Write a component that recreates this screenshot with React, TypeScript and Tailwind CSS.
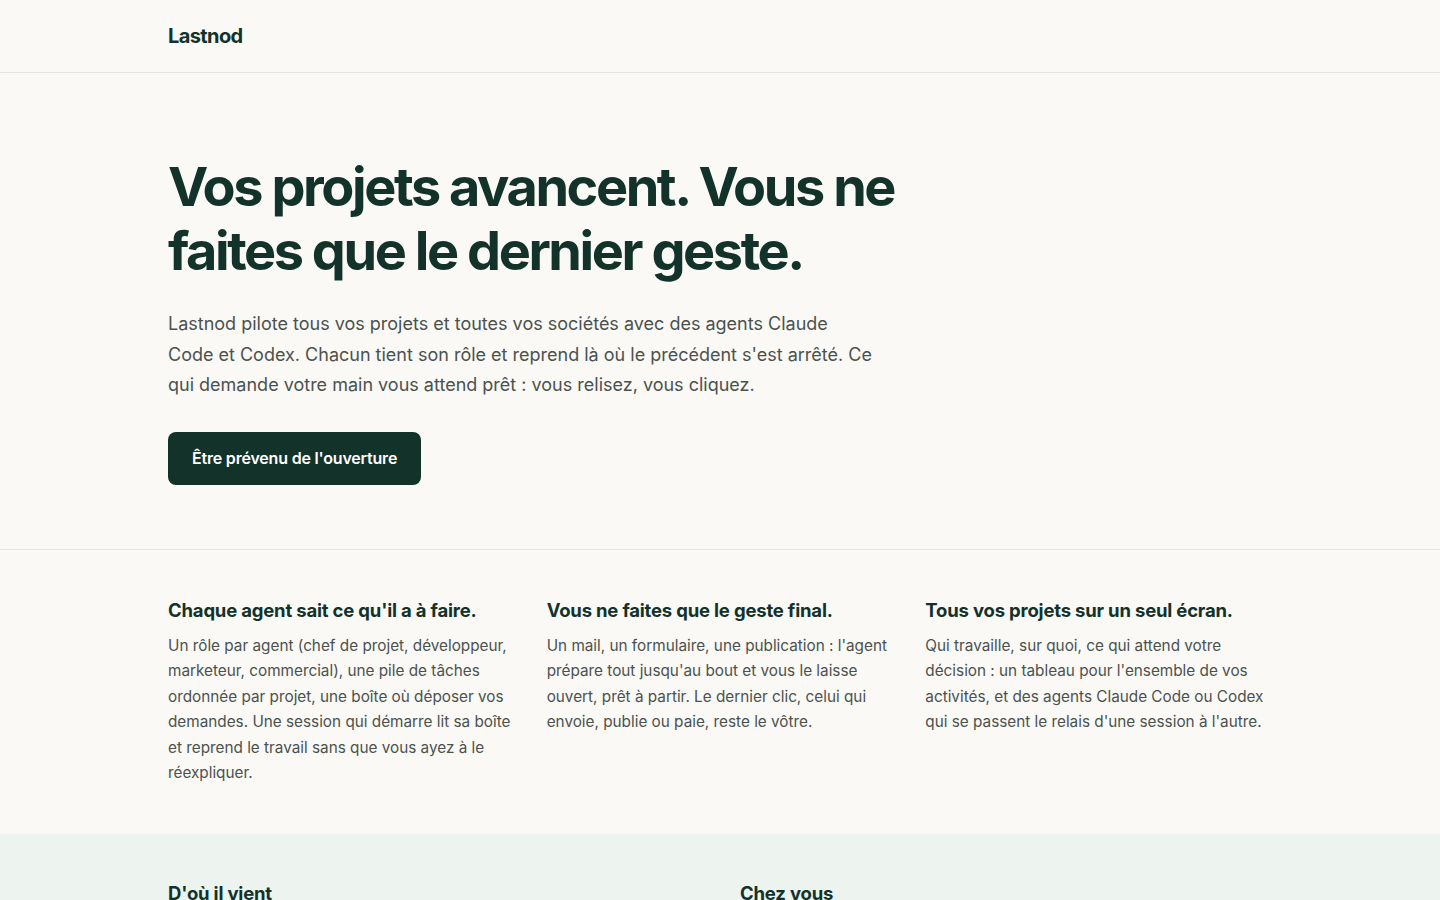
import React from "react";

const features = [
  {
    title: "Chaque agent sait ce qu'il a à faire.",
    body: "Un rôle par agent (chef de projet, développeur, marketeur, commercial), une pile de tâches ordonnée par projet, une boîte où déposer vos demandes. Une session qui démarre lit sa boîte et reprend le travail sans que vous ayez à le réexpliquer.",
  },
  {
    title: "Vous ne faites que le geste final.",
    body: "Un mail, un formulaire, une publication : l'agent prépare tout jusqu'au bout et vous le laisse ouvert, prêt à partir. Le dernier clic, celui qui envoie, publie ou paie, reste le vôtre.",
  },
  {
    title: "Tous vos projets sur un seul écran.",
    body: "Qui travaille, sur quoi, ce qui attend votre décision : un tableau pour l'ensemble de vos activités, et des agents Claude Code ou Codex qui se passent le relais d'une session à l'autre.",
  },
];

export default function App() {
  return (
    <div className="min-h-screen bg-[#faf9f6] text-[#12322a] font-['Inter','Noto_Sans',sans-serif] antialiased">
      <header className="border-b border-[#e6e4df]">
        <div className="mx-auto max-w-6xl px-6 h-[72px] flex items-center">
          <span className="text-[20px] font-bold tracking-[-0.03em] text-[#12322a]">Lastnod</span>
        </div>
      </header>

      <section className="border-b border-[#e6e4df]">
        <div className="mx-auto max-w-6xl px-6 pt-[82px] pb-16">
          <h1 className="max-w-3xl text-[54px] leading-[64px] font-bold tracking-[-0.045em] text-[#12322a]">
            Vos projets avancent. Vous ne faites que le dernier geste.
          </h1>
          <p className="mt-[26px] max-w-[704px] text-[18px] leading-[30.5px] text-[#4b524e]">
            Lastnod pilote tous vos projets et toutes vos sociétés avec des agents Claude Code et Codex. Chacun tient son rôle et reprend là où le précédent s'est arrêté. Ce qui demande votre main vous attend prêt : vous relisez, vous cliquez.
          </p>
          <button className="mt-[31px] inline-flex items-center rounded-lg bg-[#12322a] px-6 h-[53px] text-[16px] font-semibold tracking-[-0.012em] text-white">
            Être prévenu de l'ouverture
          </button>
        </div>
      </section>

      <section>
        <div className="mx-auto max-w-6xl px-6 pt-[48px] pb-12 grid grid-cols-3 gap-8">
          {features.map((f) => (
            <div key={f.title}>
              <h3 className="text-[18.5px] leading-[24px] font-bold tracking-[-0.01em] text-[#12322a]">{f.title}</h3>
              <p className="mt-[11px] text-[15.3px] leading-[25.5px] text-[#4b524e]">{f.body}</p>
            </div>
          ))}
        </div>
      </section>

      <section className="bg-[#edf3ef]">
        <div className="mx-auto max-w-6xl px-6 pt-[47px] pb-12 grid grid-cols-2 gap-10">
          <div>
            <h3 className="text-[18.5px] leading-[24px] font-bold tracking-[-0.01em] text-[#12322a]">D'où il vient</h3>
            <p className="mt-[11px] text-[15.3px] leading-[25.5px] text-[#4b524e]">
              Lastnod est né d'un besoin simple : faire avancer plusieurs sociétés à la fois sans perdre le fil d'une session à l'autre.
            </p>
          </div>
          <div>
            <h3 className="text-[18.5px] leading-[24px] font-bold tracking-[-0.01em] text-[#12322a]">Chez vous</h3>
            <p className="mt-[11px] text-[15.3px] leading-[25.5px] text-[#4b524e]">
              Vos agents tournent sur votre machine, avec vos accès. Rien ne part sans votre dernier geste.
            </p>
          </div>
        </div>
      </section>
    </div>
  );
}
